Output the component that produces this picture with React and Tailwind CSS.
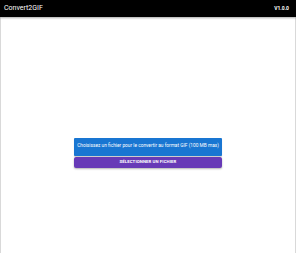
import React from 'react';

const App = () => {
    return (
        <div className="w-[296px] h-[253px] bg-white flex flex-col font-['Roboto',sans-serif]">
            <header className="h-[17px] bg-black flex items-center justify-between px-[4px] shadow-[0_1px_2px_rgba(0,0,0,0.35)] relative z-10">
                <span className="text-white text-[7px] leading-none">Convert2GIF</span>
                <span className="text-white text-[5px] font-bold leading-none pr-[3px]">V1.0.0</span>
            </header>
            <main className="flex-1 flex flex-col items-center justify-center border-x border-[#d9d9d9] pt-[35px]">
                <div className="w-[148px] flex flex-col gap-[1px]">
                    <div className="h-[18px] bg-[#1976d2] rounded-[1px] flex items-center justify-center shadow-[0_1px_1px_rgba(0,0,0,0.2)]">
                        <p className="text-white text-[4.8px] leading-none whitespace-nowrap">Choisissez un fichier pour le convertir au format GIF (100 MB max)</p>
                    </div>
                    <button className="h-[11px] bg-[#673ab7] rounded-[2px] flex items-center justify-center shadow-[0_1px_2px_rgba(0,0,0,0.3)]">
                        <span className="text-white text-[4.3px] font-bold uppercase leading-none tracking-[0.1px]">Sélectionner un fichier</span>
                    </button>
                </div>
            </main>
        </div>
    );
};

export default App;
